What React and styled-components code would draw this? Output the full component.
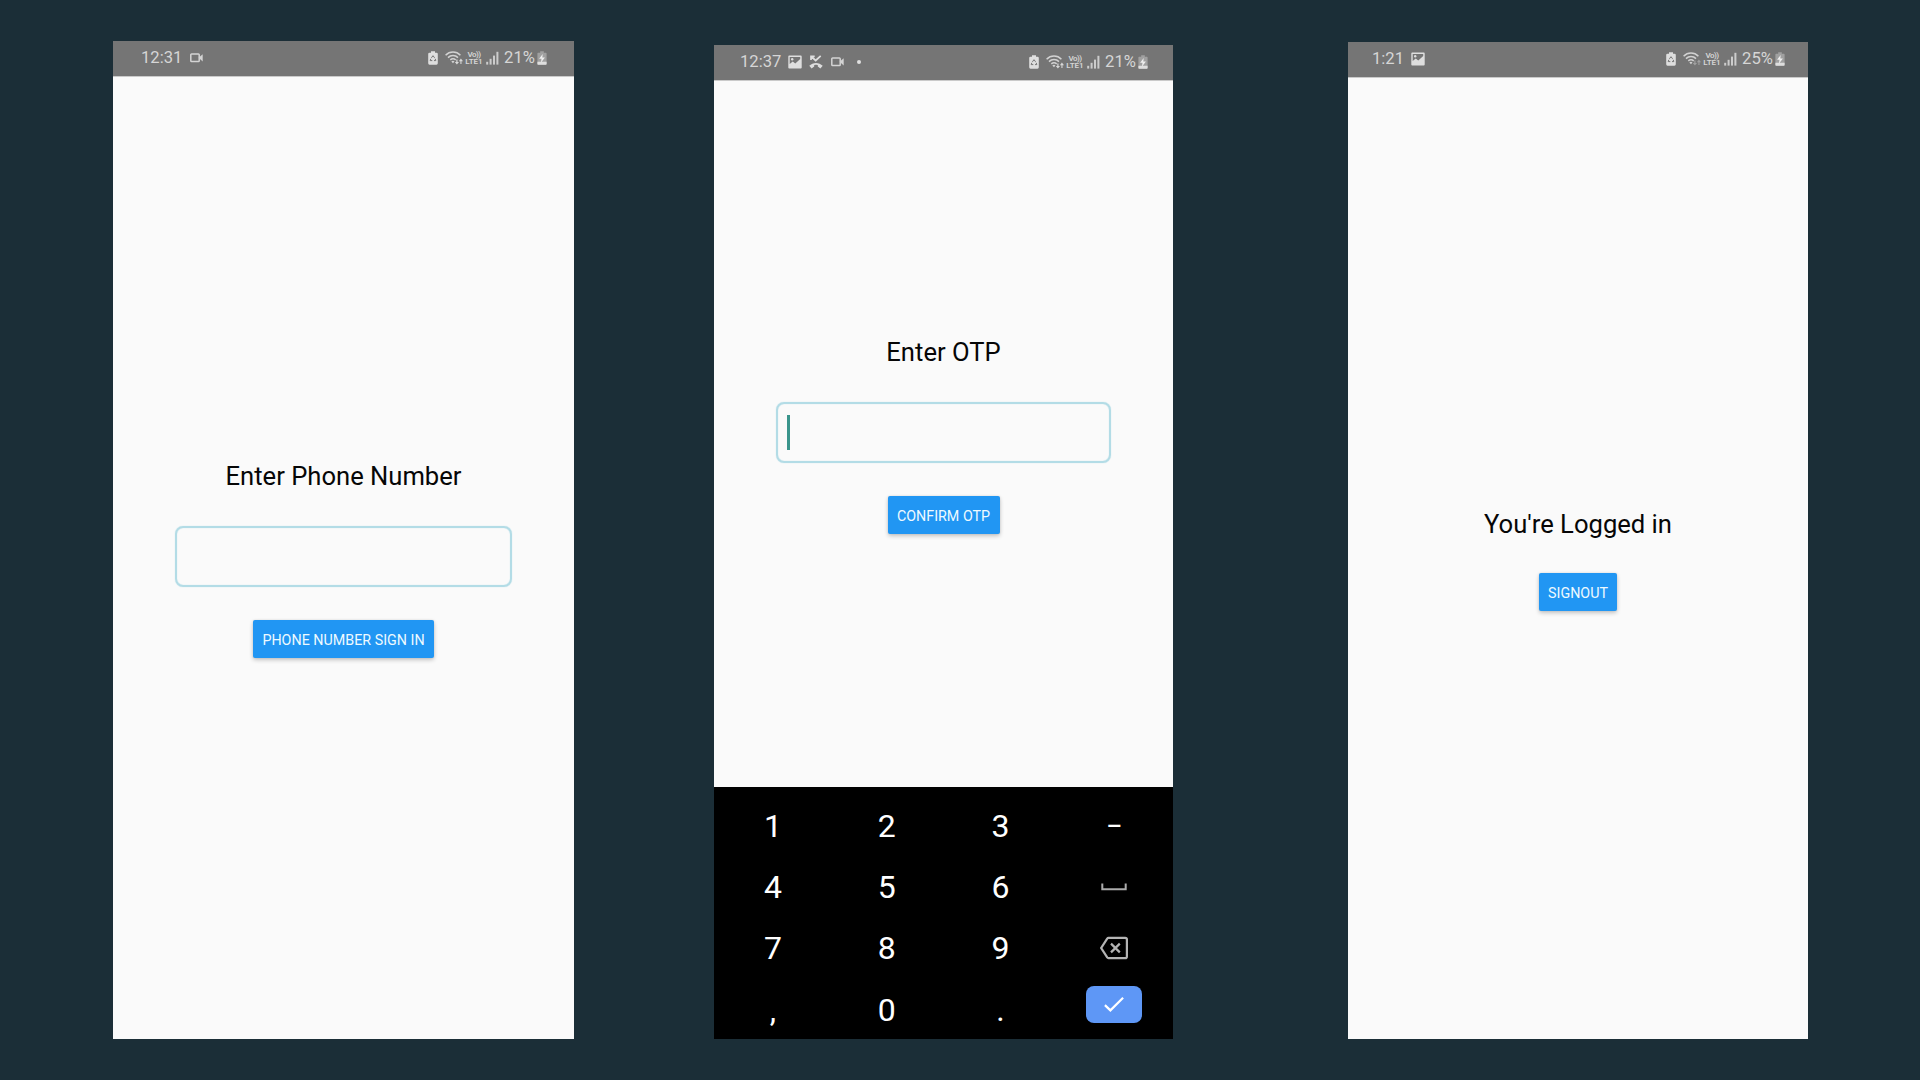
import React from "react";
import styled, { createGlobalStyle } from "styled-components";

const GlobalStyle = createGlobalStyle`
  * { box-sizing: border-box; }
  body { margin: 0; background: #1b2e37; font-family: Roboto, "Liberation Sans", sans-serif; }
`;

const Stage = styled.main`
  width: 1920px;
  height: 1080px;
  padding: 0 112px 41px 113px;
  display: grid;
  grid-template-columns: 461px 140px 459px 175px 460px;
  align-items: end;
  overflow: hidden;
`;

const Phone = styled.section`
  grid-column: ${(p) => p.$col};
  height: ${(p) => p.$height}px;
  display: flex;
  flex-direction: column;
  background: #fafafa;
`;

const StatusBar = styled.header`
  flex: none;
  height: 36px;
  padding: 0 ${(p) => p.$right}px 2px ${(p) => p.$left}px;
  display: flex;
  justify-content: space-between;
  align-items: center;
  background: #757575;
  border-bottom: 1px solid #cacaca;
  color: #d6d6d6;
  font-size: 16.6px;
  line-height: 20px;
  svg { display: block; flex: none; }
`;

const Notices = styled.div`
  display: flex;
  align-items: center;
  gap: 7.5px;
`;

const Time = styled.span`
  margin-right: ${(p) => p.$tuck || 0}px;
`;

const Indicators = styled.div`
  display: flex;
  align-items: center;
`;

const Dot = styled.span`
  width: 4px;
  height: 4px;
  margin-left: 6px;
  border-radius: 50%;
  background: #e0e0e0;
`;

const Volte = styled.span`
  width: 17px;
  margin: 0 3.5px 0 3px;
  display: flex;
  flex-direction: column;
  align-items: center;
  font-size: 8px;
  font-weight: 600;
  line-height: 7px;
`;

const VolteTop = styled.span`
  letter-spacing: -0.5px;
`;

const Percent = styled.span`
  width: 31px;
  margin: 0 2px 0 5px;
  display: flex;
  justify-content: center;
`;

const Content = styled.div`
  flex: 1;
  padding-top: ${(p) => p.$top}px;
  display: flex;
  flex-direction: column;
  align-items: center;
`;

const Title = styled.h1`
  margin: 0;
  font-size: 25.6px;
  line-height: 30px;
  font-weight: 400;
  color: #060606;
  white-space: nowrap;
`;

const Field = styled.div`
  width: ${(p) => p.$width}px;
  height: ${(p) => p.$height}px;
  margin: ${(p) => p.$top}px 0 33px;
  padding-left: 9px;
  display: flex;
  align-items: center;
  border: 2px solid #b3dce6;
  border-radius: 8px;
  box-shadow: 0 0 1px #b3dce6, inset 0 0 1px #b3dce6;
`;

const Caret = styled.span`
  width: 3px;
  height: 35px;
  background: #3a958c;
`;

const Button = styled.button`
  width: ${(p) => p.$width}px;
  height: 38px;
  margin: ${(p) => p.$top || 0}px 0 0;
  padding: 1px 0 0;
  border: 0;
  border-radius: 2px;
  background: #2196f3;
  box-shadow: 0 2px 4px rgba(0, 0, 0, 0.22), 0 0 2px rgba(0, 0, 0, 0.1);
  color: #eefaff;
  font: 400 14.3px/18px Roboto, "Liberation Sans", sans-serif;
  white-space: nowrap;
`;

const Keypad = styled.div`
  flex: none;
  height: 252px;
  padding: 8px 2px 0 2px;
  display: grid;
  grid-template-columns: repeat(4, 1fr);
  grid-template-rows: repeat(4, 61.3px);
  background: #000;
`;

const Key = styled.div`
  display: flex;
  align-items: center;
  justify-content: center;
  color: #fff;
  font-size: 32px;
  line-height: 38px;
  padding-bottom: ${(p) => p.$lift || 0}px;
  svg { display: block; }
`;

const Dash = styled.span`
  font-size: 24px;
  font-weight: 500;
  line-height: 28px;
`;

const EnterKey = styled.div`
  width: 56px;
  height: 37px;
  display: flex;
  align-items: center;
  justify-content: center;
  border-radius: 8px;
  background: #5e97f6;
`;

const VideoIcon = () => (
  <svg width="13" height="10" viewBox="0 0 13 10">
    <rect x="0.8" y="1" width="8.4" height="7.6" rx="0.8" fill="none" stroke="#d4d4d4" strokeWidth="1.5" />
    <path d="M8.6 4.8 12.7 1.3V8.4Z" fill="#d4d4d4" />
  </svg>
);

const PictureIcon = () => (
  <svg width="14" height="14" viewBox="0 0 14 14">
    <path
      fillRule="evenodd"
      fill="#dedede"
      d="M1.2 0.5h11.6q.9 0 .9.9v11.2q0 .9-.9.9H1.2q-.9 0-.9-.9V1.4q0-.9.9-.9ZM1.7 1.9v7l3-2.5 2.6 2.1 4.9-4.4V1.9Z"
    />
    <circle cx="4.2" cy="4.2" r="1.2" fill="#dedede" />
  </svg>
);

const MissedCallIcon = () => (
  <svg width="14" height="14" viewBox="0 0 14 14">
    <path d="M2 4.9V1.3h3.7M2.2 1.5l4.5 4 5-4.6" fill="none" stroke="#dedede" strokeWidth="1.7" />
    <path
      d="M.3 10.8C3.8 6.9 10.2 6.9 13.7 10.8L11.4 13.4 8.8 11.5V10Q7 9.5 5.2 10V11.5L2.6 13.4Z"
      fill="#dedede"
    />
  </svg>
);

const SaverIcon = () => (
  <svg width="10" height="14" viewBox="0 0 10 14">
    <path d="M3 .3h4v1.5h1.5q1.3 0 1.3 1.3v9.2q0 1.4-1.3 1.4h-7Q.2 13.7.2 12.3V3.1q0-1.3 1.3-1.3H3Z" fill="#dedede" />
    <path d="M3.4 6.8 5 4.7 6.6 6.8M7.2 7.8 7.8 9.6H6M4.3 9.6H2.2L2.8 7.8" fill="none" stroke="#757575" strokeWidth="1" />
  </svg>
);

const WifiIcon = ({ dim }) => (
  <svg width="18" height="14" viewBox="0 0 18 14">
    <g fill="none" stroke="#d2d2d2" strokeWidth="1.5">
      <path d="M.6 4.2C4.7-.1 11.3-.1 15.4 4.2" />
      <path d="M3 6.6C5.8 3.8 10.2 3.8 13 6.6" />
      <path d="M5.3 8.9C6.9 7.5 9.1 7.5 10.7 8.9" />
    </g>
    <path d="M6.3 10.4Q8 9 9.5 10.4L8 12.3Z" fill="#d2d2d2" />
    <g fill={dim ? "#a0a0a0" : "#d8d8d8"}>
      <path d="M11.3 8.5h1.2v2.4H14l-2.1 2.7-2.1-2.7h1.5Z" />
      <path d="M15.4 13h1.1v-2.8H18l-2.1-2.6-2 2.6h1.5Z" />
    </g>
  </svg>
);

const SignalIcon = () => (
  <svg width="13" height="14" viewBox="0 0 13 14" fill="#cccccc">
    <rect x="0.2" y="10.8" width="2" height="2.8" />
    <rect x="3.6" y="7.8" width="2" height="5.8" />
    <rect x="7" y="4.6" width="2" height="9" />
    <rect x="10.4" y="0.8" width="2" height="12.8" />
  </svg>
);

const BatteryIcon = () => (
  <svg width="10" height="14" viewBox="0 0 10 14">
    <path d="M3.2.2h3.6v1.5h2q.8 0 .8.8v10.4q0 .8-.8.8H1.2q-.8 0-.8-.8V2.5q0-.8.8-.8h2Z" fill="#a0a0a0" />
    <path d="M.4 10.8h9.2v2.1q0 .8-.8.8H1.2q-.8 0-.8-.8Z" fill="#dedede" />
    <path d="M5.7 2.9 2.1 7.7H4.5L3.9 11.8 7.9 6.6H5.3Z" fill="#efefef" />
  </svg>
);

const SpaceIcon = () => (
  <svg width="26" height="8" viewBox="0 0 26 8">
    <path d="M1.3.5V6.3H24.7V.5" fill="none" stroke="#ababab" strokeWidth="2" />
  </svg>
);

const BackspaceIcon = () => (
  <svg width="28" height="24" viewBox="0 0 28 24">
    <g fill="none" stroke="#b4b4b4" strokeWidth="2.2">
      <path d="M8.4 1.9H25.2Q26.9 1.9 26.9 3.6V20.4Q26.9 22.1 25.2 22.1H8.4Q7.7 22.1 7.2 21.4L1.2 12 7.2 2.6Q7.7 1.9 8.4 1.9Z" />
      <path d="M11 7.6 19.8 16.4M19.8 7.6 11 16.4" />
    </g>
  </svg>
);

const CheckIcon = () => (
  <svg width="20" height="15" viewBox="0 0 20 15">
    <path d="M.9 8.1 6.4 13.4 19.1.8" fill="none" stroke="#fff" strokeWidth="2.2" />
  </svg>
);

const StatusIndicators = ({ percent, dimArrows }) => (
  <Indicators>
    <SaverIcon />
    <svg width="7" height="1" />
    <WifiIcon dim={dimArrows} />
    <Volte>
      <VolteTop>Vo))</VolteTop>
      <span>LTE1</span>
    </Volte>
    <SignalIcon />
    <Percent>{percent}</Percent>
    <BatteryIcon />
  </Indicators>
);

const keys = [
  "1", "2", "3", <Dash>–</Dash>,
  "4", "5", "6", <SpaceIcon />,
  "7", "8", "9", <BackspaceIcon />,
  ",", "0", ".",
];

export default function App() {
  return (
    <>
      <GlobalStyle />
      <Stage>
        <Phone $col={1} $height={998}>
          <StatusBar $left={28} $right={27}>
            <Notices>
              <Time>12:31</Time>
              <VideoIcon />
            </Notices>
            <StatusIndicators percent="21%" />
          </StatusBar>
          <Content $top={384}>
            <Title>Enter Phone Number</Title>
            <Field $width={337} $height={61} $top={35} />
            <Button $width={181}>PHONE NUMBER SIGN IN</Button>
          </Content>
        </Phone>
        <Phone $col={3} $height={994}>
          <StatusBar $left={26} $right={25}>
            <Notices>
              <Time $tuck={-1}>12:37</Time>
              <PictureIcon />
              <MissedCallIcon />
              <VideoIcon />
              <Dot />
            </Notices>
            <StatusIndicators percent="21%" />
          </StatusBar>
          <Content $top={256}>
            <Title>Enter OTP</Title>
            <Field $width={335} $height={61} $top={35}>
              <Caret />
            </Field>
            <Button $width={112}>CONFIRM OTP</Button>
          </Content>
          <Keypad>
            {keys.map((k, i) => (
              <Key key={i}>{k}</Key>
            ))}
            <Key $lift={10}>
              <EnterKey>
                <CheckIcon />
              </EnterKey>
            </Key>
          </Keypad>
        </Phone>
        <Phone $col={5} $height={997}>
          <StatusBar $left={24} $right={23}>
            <Notices>
              <Time $tuck={-1}>1:21</Time>
              <PictureIcon />
            </Notices>
            <StatusIndicators percent="25%" dimArrows />
          </StatusBar>
          <Content $top={431}>
            <Title>You're Logged in</Title>
            <Button $width={78} $top={34}>SIGNOUT</Button>
          </Content>
        </Phone>
      </Stage>
    </>
  );
}
